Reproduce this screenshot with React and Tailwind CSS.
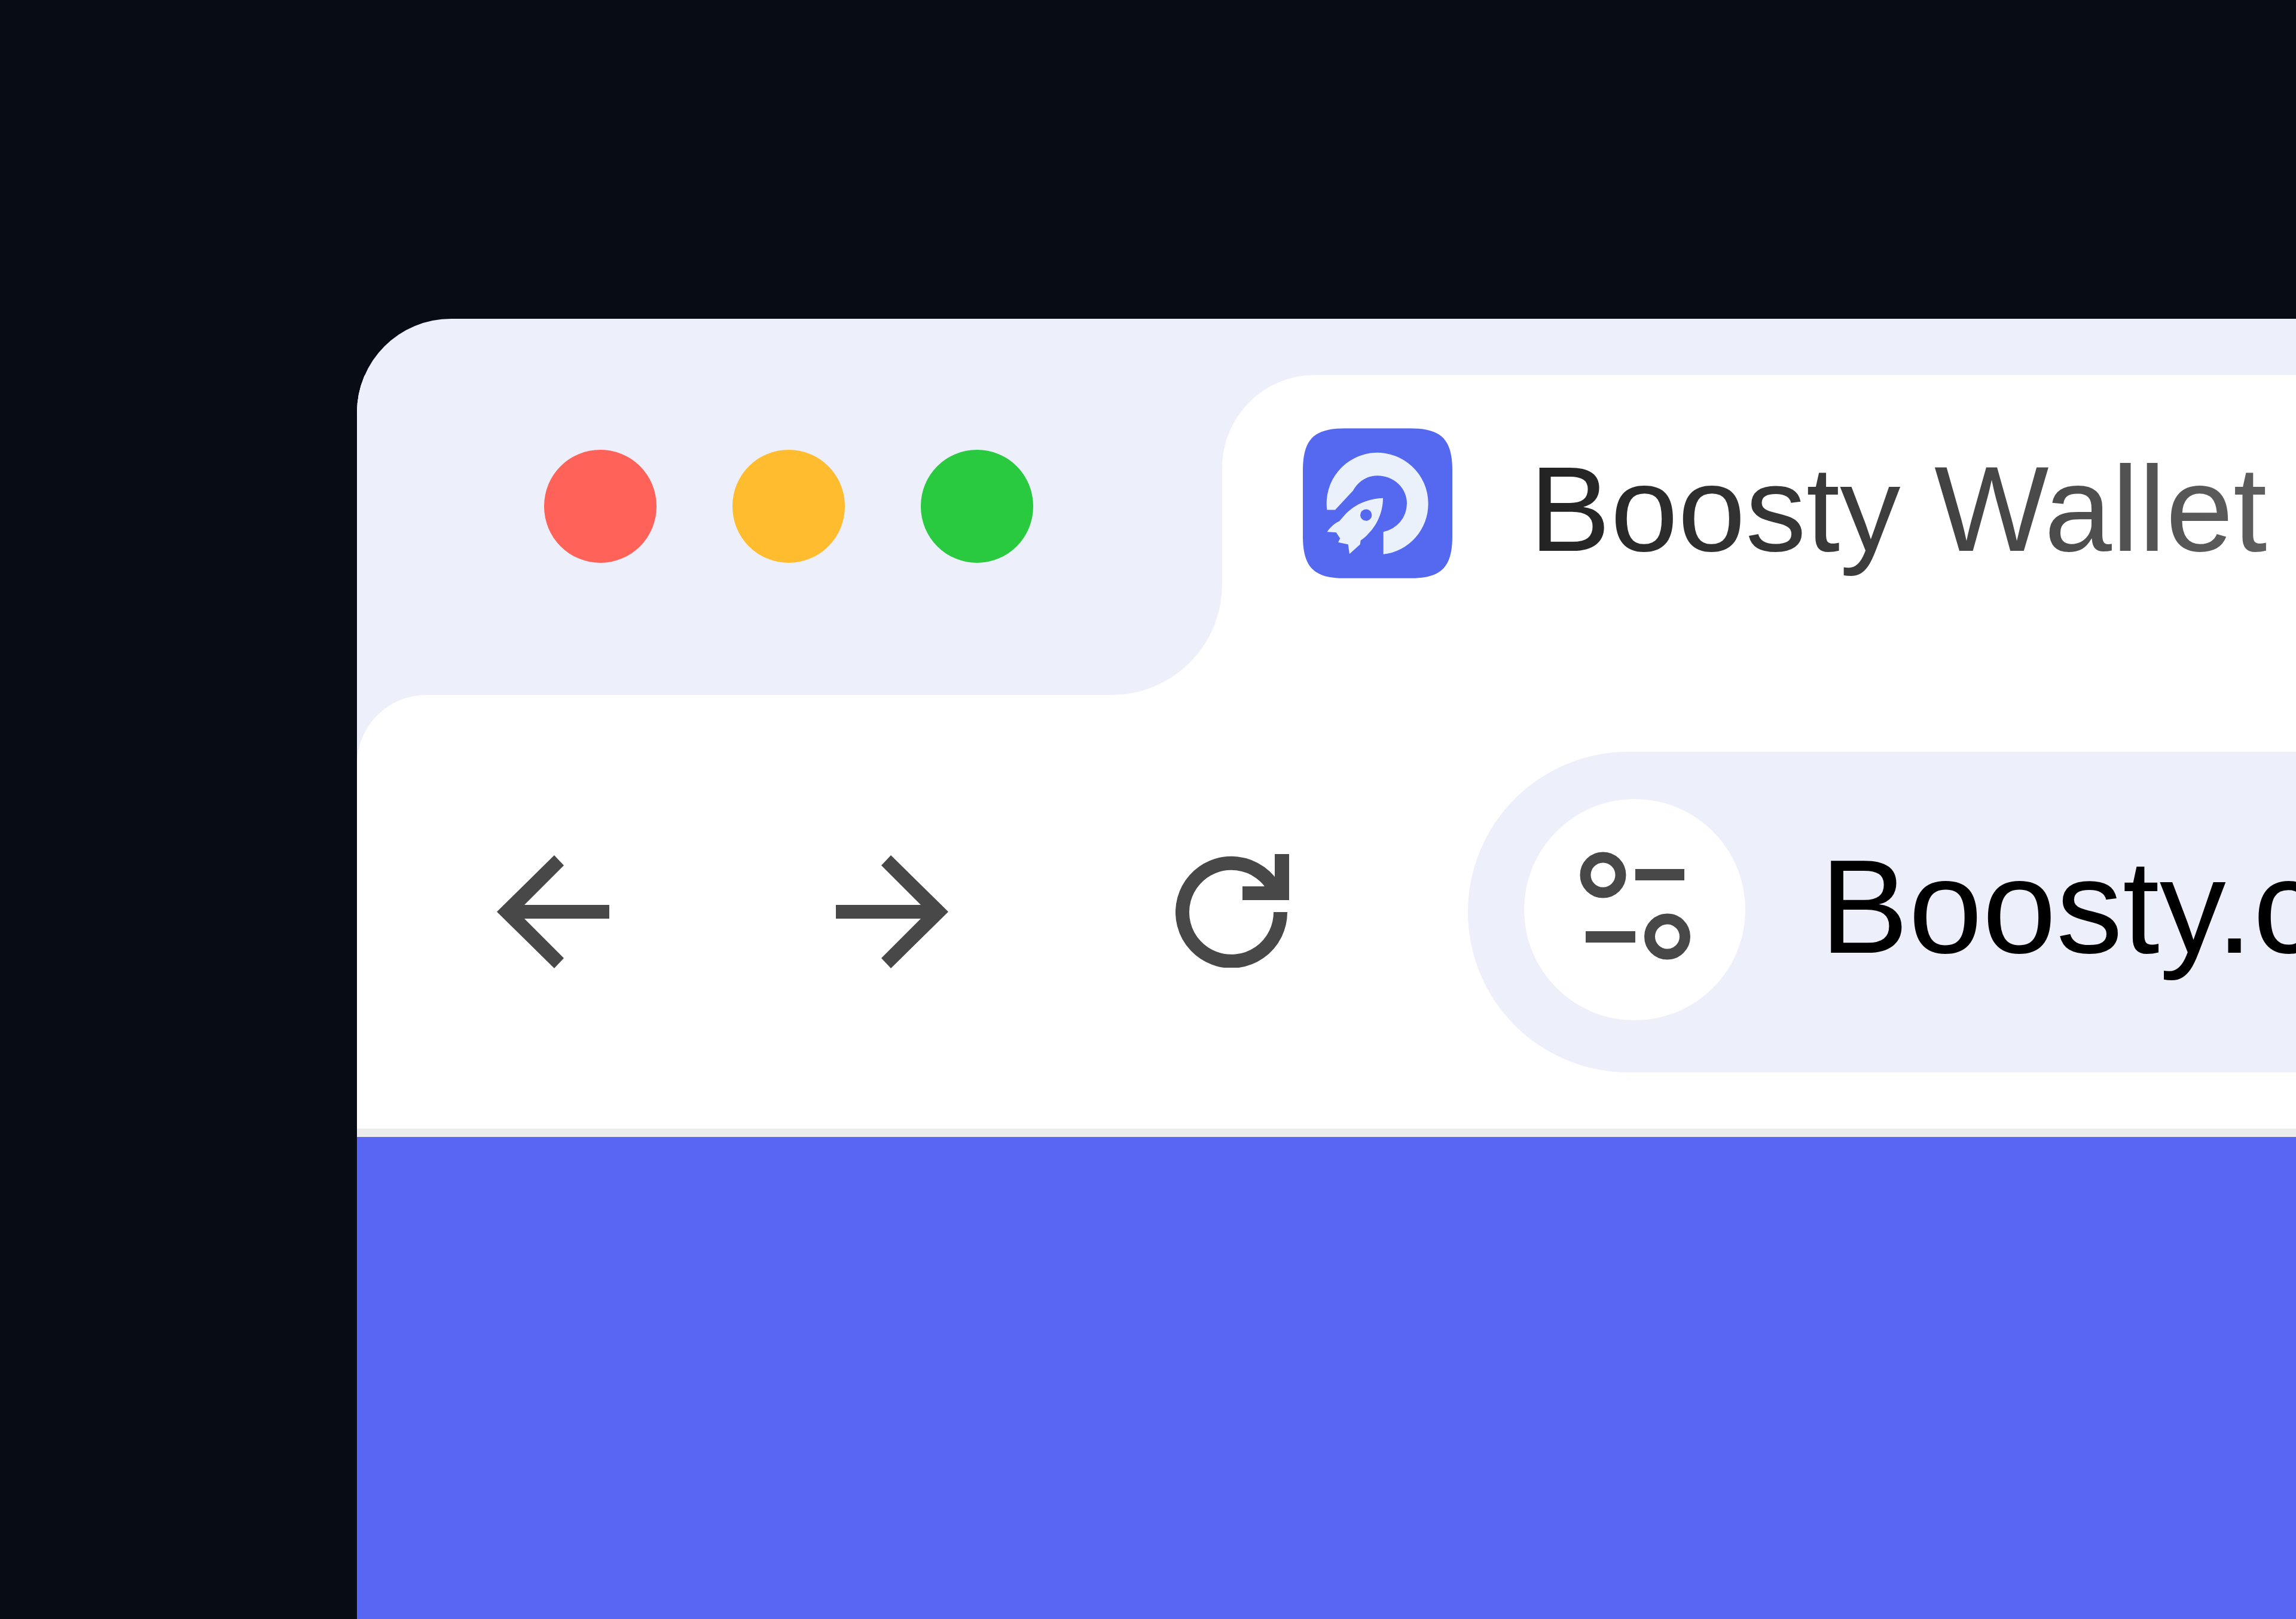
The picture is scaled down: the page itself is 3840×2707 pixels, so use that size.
const fontClass = "font-['Liberation_Sans','Arial',sans-serif]"

function Arrow({ flip }) {
  return (
    <svg viewBox="0 0 188 189" className={`h-[189px] w-[188px] shrink-0 text-[#484848] ${flip ? "-scale-x-100" : ""}`}>
      <path fill="currentColor" d="M0 94.5 96 0 112 17 46 83H188V106H46L112 172 96 189Z" />
    </svg>
  )
}

function Reload() {
  return (
    <svg viewBox="0 0 190 190" className="h-[190px] w-[190px] shrink-0 text-[#484848]">
      <path fill="none" stroke="currentColor" strokeWidth="23" d="M175.5 97A82 82 0 1 1 166 59" />
      <path fill="currentColor" d="M166 0H190V77H112V54H166Z" />
    </svg>
  )
}

function SiteSettings() {
  return (
    <svg viewBox="0 0 190 190" className="h-[190px] w-[190px] overflow-visible text-[#484848]">
      <circle cx="42" cy="37" r="29.5" fill="none" stroke="currentColor" strokeWidth="18" />
      <rect x="96" y="27" width="82" height="19" fill="currentColor" />
      <rect x="13" y="131" width="83" height="19" fill="currentColor" />
      <circle cx="149.5" cy="140" r="29.5" fill="none" stroke="currentColor" strokeWidth="18" />
    </svg>
  )
}

function Logo() {
  return (
    <svg viewBox="118 78 750 752" className="h-[251px] w-[250px] shrink-0">
      <path fill="#5468F0" d="M330 78H656C810 78 868 130 868 290V618C868 778 810 830 656 830H330C176 830 118 778 118 618V290C118 130 176 78 330 78Z" />
      <path fill="#EBF1FB" d="M239 487A255 255 0 1 1 747 455A255 255 0 0 1 522 710V597A145 145 0 0 0 640 455A148 140 0 0 0 492 315C440 315 395 345 370 390L280 487Z" />
      <path fill="#EBF1FB" d="M520 428C440 432 380 460 335 505L300 545C280 552 255 575 240 597L285 600 305 630 295 650 345 660 352 708 405 660 408 640C480 590 520 510 520 428Z" />
      <circle cx="435" cy="513" r="29" fill="#5468F0" />
    </svg>
  )
}

export default function App() {
  return (
    <div className={`h-[2707px] w-full overflow-hidden bg-[#080C14] pl-[597px] pt-[533px] ${fontClass}`}>
      <div className="flex h-full flex-col overflow-hidden rounded-tl-[157px] bg-[#EDF0FB]">
        {/* Tab strip */}
        <div className="h-[94px] shrink-0" />
        <div className="flex h-[535px] shrink-0 bg-white">
          <div className="flex w-[1447px] shrink-0 items-start gap-[127px] rounded-br-[185px] bg-[#EDF0FB] pl-[313px] pt-[125px]">
            <div className="h-[189px] w-[188px] rounded-full bg-[#FF6259]" />
            <div className="h-[189px] w-[188px] rounded-full bg-[#FFBC2F]" />
            <div className="h-[189px] w-[188px] rounded-full bg-[#29C940]" />
          </div>
          <div className="min-w-0 flex-1 bg-[#EDF0FB]">
            <div className="flex h-full items-start gap-[129px] rounded-tl-[155px] bg-white pl-[135px] pt-[89px]">
              <Logo />
              <span className="mt-[20px] whitespace-nowrap bg-gradient-to-r from-[#222222] to-[#5E5E5E] bg-clip-text text-[203px] leading-[230px] text-transparent">
                Boosty Wallet
              </span>
            </div>
          </div>
        </div>

        {/* Toolbar */}
        <div className="flex h-[739px] shrink-0 items-start rounded-tl-[116px] border-b-[14px] border-[#ECECEC] bg-white pl-[234px] pt-[95px]">
          <div className="mt-[173px]"><Arrow /></div>
          <div className="ml-[379px] mt-[173px]"><Arrow flip /></div>
          <div className="ml-[380px] mt-[171px]"><Reload /></div>
          <div className="ml-[299px] flex h-[536px] min-w-0 flex-1 items-start overflow-hidden rounded-l-[268px] bg-[#EDF0FB] pl-[94px] pt-[79px]">
            <div className="flex h-[370px] w-[370px] shrink-0 items-center justify-center rounded-full bg-white">
              <SiteSettings />
            </div>
            <span className="ml-[125px] mt-[54px] whitespace-nowrap text-[222px] leading-[253px] text-black">Boosty.com</span>
          </div>
        </div>

        {/* Page */}
        <div className="min-h-0 flex-1 bg-[#5966F3]" />
      </div>
    </div>
  )
}
